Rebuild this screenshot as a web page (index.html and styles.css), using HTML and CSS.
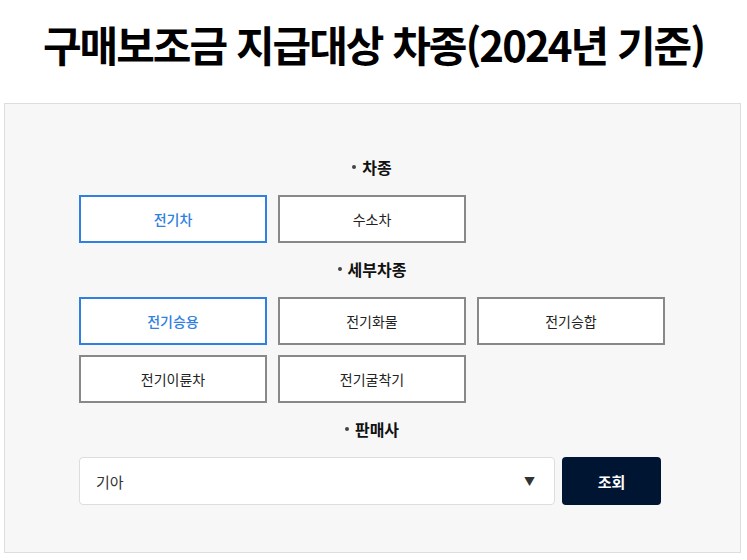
FILE: index.html
```html
<!DOCTYPE html>
<html lang="ko">
<head>
  <meta charset="UTF-8">
  <title>구매보조금 지급대상 차종</title>
  <link rel="stylesheet" href="styles.css">
</head>
<body>
  <h1 class="page-title">구매보조금 지급대상 차종(2024년 기준)</h1>

  <div class="search-box">
    <div class="search-inner">
      <div class="field-label"><span class="dot"></span>차종</div>
      <div class="option-grid">
        <button class="option active">전기차</button>
        <button class="option">수소차</button>
      </div>

      <div class="field-label"><span class="dot"></span>세부차종</div>
      <div class="option-grid">
        <button class="option active">전기승용</button>
        <button class="option">전기화물</button>
        <button class="option">전기승합</button>
        <button class="option">전기이륜차</button>
        <button class="option">전기굴착기</button>
      </div>

      <div class="field-label"><span class="dot"></span>판매사</div>
      <div class="search-row">
        <div class="fake-select">
          <span>기아</span>
          <span class="arrow">▼</span>
        </div>
        <button class="search-button">조회</button>
      </div>
    </div>
  </div>
</body>
</html>
```

FILE: styles.css
```css
* {
  box-sizing: border-box;
}

body {
  margin: 0;
  font-family: "Noto Sans CJK KR", "Noto Sans", sans-serif;
  background: #ffffff;
  color: #222;
}

.page-title {
  margin: 0 0 28px;
  padding-top: 12px;
  font-size: 42px;
  line-height: 63px;
  letter-spacing: -2px;
  font-weight: 700;
  text-align: center;
  color: #000;
}

.search-box {
  width: 737px;
  margin-left: 4px;
  height: 450px;
  background: #f7f7f7;
  border: 1px solid #dddddd;
  padding: 51px 0 0 74px;
}

.search-inner {
  width: 586px;
}

.field-label {
  display: flex;
  justify-content: center;
  align-items: center;
  height: 24px;
  margin-bottom: 16px;
  font-size: 16px;
  font-weight: 700;
  color: #111;
}

.dot {
  width: 4px;
  height: 4px;
  border-radius: 50%;
  background: #444;
  margin-right: 6px;
}

.option-grid {
  display: grid;
  grid-template-columns: repeat(3, 188px);
  column-gap: 11px;
  row-gap: 10px;
  margin-bottom: 14px;
}

.option {
  height: 48px;
  background: #fff;
  border: 2px solid #888888;
  font-family: inherit;
  font-size: 14px;
  color: #222;
  cursor: pointer;
  padding: 0;
}

.option.active {
  border-color: #2f80e1;
  color: #2f80e1;
  font-weight: 500;
}

.search-row {
  display: flex;
  gap: 7px;
  width: 582px;
}

.fake-select {
  width: 476px;
  height: 48px;
  background: #fff;
  border: 1px solid #dddddd;
  border-radius: 4px;
  display: flex;
  align-items: center;
  justify-content: space-between;
  padding: 0 19px 0 16px;
  font-size: 15px;
  color: #333;
}

.arrow {
  font-size: 11px;
  color: #333;
}

.search-button {
  width: 99px;
  height: 48px;
  background: #001532;
  color: #fff;
  border: none;
  border-radius: 4px;
  font-family: inherit;
  font-size: 15px;
  font-weight: 700;
  cursor: pointer;
}
```
